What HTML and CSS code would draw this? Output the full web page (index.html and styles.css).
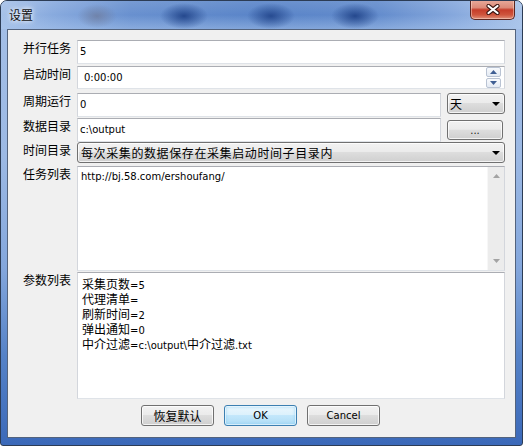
FILE: index.html
```html
<!DOCTYPE html>
<html lang="zh-CN">
<head>
<meta charset="utf-8">
<title>设置</title>
<link rel="stylesheet" href="styles.css">
</head>
<body>
<div class="window">
  <div class="titlebar">
    <span class="title">设置</span>
    <div class="close-btn">
      <svg width="14" height="11" viewBox="0 0 14 11">
        <path d="M2.5 2 L11.5 9 M11.5 2 L2.5 9" stroke="#3c1612" stroke-width="4.2" stroke-linecap="round" fill="none"/>
        <path d="M2.5 2 L11.5 9 M11.5 2 L2.5 9" stroke="#ffffff" stroke-width="2.2" stroke-linecap="round" fill="none"/>
      </svg>
    </div>
  </div>
  <div class="client">
    <div class="row r1">
      <div class="lbl">并行任务</div>
      <div class="edit full"><span class="txt">5</span></div>
    </div>
    <div class="row r2">
      <div class="lbl">启动时间</div>
      <div class="edit full">
        <span class="txt time">0:00:00</span>
        <div class="spin">
          <div class="spin-btn"><svg width="7" height="4" viewBox="0 0 7 4"><path d="M0 4 L3.5 0 L7 4 Z" fill="#3f5e93"/></svg></div>
          <div class="spin-btn"><svg width="7" height="4" viewBox="0 0 7 4"><path d="M0 0 L3.5 4 L7 0 Z" fill="#3f5e93"/></svg></div>
        </div>
      </div>
    </div>
    <div class="row r3">
      <div class="lbl">周期运行</div>
      <div class="edit short"><span class="txt">0</span></div>
      <div class="combo small">
        <span class="combo-txt">天</span>
        <svg class="arrow" width="8" height="4" viewBox="0 0 8 4"><path d="M0 0 L8 0 L4 4 Z" fill="#000"/></svg>
      </div>
    </div>
    <div class="row r4">
      <div class="lbl">数据目录</div>
      <div class="edit short"><span class="txt">c:\output</span></div>
      <div class="btn dots">...</div>
    </div>
    <div class="row r5">
      <div class="lbl">时间目录</div>
      <div class="combo wide">
        <span class="combo-txt long">每次采集的数据保存在采集启动时间子目录内</span>
        <svg class="arrow" width="8" height="4" viewBox="0 0 8 4"><path d="M0 0 L8 0 L4 4 Z" fill="#000"/></svg>
      </div>
    </div>
    <div class="row r6">
      <div class="lbl">任务列表</div>
      <div class="memo full">
        <div class="memo-txt task">http://bj.58.com/ershoufang/</div>
        <div class="vscroll">
          <svg width="7" height="4" viewBox="0 0 7 4"><path d="M0 4 L3.5 0 L7 4 Z" fill="#a3a3a3"/></svg>
          <svg width="7" height="4" viewBox="0 0 7 4"><path d="M0 0 L3.5 4 L7 0 Z" fill="#a3a3a3"/></svg>
        </div>
      </div>
    </div>
    <div class="row r7">
      <div class="lbl">参数列表</div>
      <div class="memo full">
        <div class="memo-txt params">
          <div><span class="cj">采集页数</span>=5</div>
          <div><span class="cj">代理清单</span>=</div>
          <div><span class="cj">刷新时间</span>=2</div>
          <div><span class="cj">弹出通知</span>=0</div>
          <div><span class="cj">中介过滤</span>=c:\output\<span class="cj">中介过滤</span>.txt</div>
        </div>
      </div>
    </div>
    <div class="buttons">
      <div class="btn push cjk">恢复默认</div>
      <div class="btn push default">OK</div>
      <div class="btn push">Cancel</div>
    </div>
  </div>
</div>
</body>
</html>
```

FILE: styles.css
```css
* { box-sizing: border-box; }
html, body { margin: 0; padding: 0; }
body {
  width: 523px;
  height: 446px;
  overflow: hidden;
  background: #ffffff;
  font-family: "Noto Sans CJK SC", sans-serif;
  color: #000;
}

.window {
  width: 523px;
  height: 446px;
  border: 1px solid #2c3c55;
  border-radius: 7px 7px 3px 3px;
  padding: 0 6px 7px 6px;
  background: linear-gradient(180deg, #a4bfe7 0%, #9cb9e4 35%, #84a7dc 60%, #5582c7 80%, #3b69b9 100%);
  display: flex;
  flex-direction: column;
  overflow: hidden;
}

.titlebar {
  height: 28px;
  margin: 0 -6px;
  display: flex;
  justify-content: space-between;
  align-items: flex-start;
  background:
    radial-gradient(ellipse 20px 12px at 96px 15px, rgba(110,125,160,0.8), rgba(110,125,160,0)),
    radial-gradient(ellipse 24px 13px at 183px 15px, rgba(30,65,135,0.9), rgba(30,65,135,0)),
    radial-gradient(ellipse 24px 13px at 270px 15px, rgba(30,65,135,0.85), rgba(30,65,135,0)),
    radial-gradient(ellipse 24px 13px at 354px 15px, rgba(30,65,135,0.9), rgba(30,65,135,0)),
    linear-gradient(180deg, rgba(255,255,255,0.1) 0%, rgba(255,255,255,0) 50%, rgba(170,198,236,0.5) 100%),
    linear-gradient(90deg, #a6c1e8 0%, #88aade 10%, #6890cf 25%, #5984c8 50%, #628bcc 72%, #86a8dd 87%, #abc5ea 100%);
}

.title {
  align-self: center;
  padding-left: 8px;
  font-size: 12px;
  line-height: 14px;
  color: #111;
  text-shadow: 0 0 4px #ffffff, 0 0 7px rgba(255,255,255,0.9);
}

.close-btn {
  width: 45px;
  height: 20px;
  margin-top: -1px;
  margin-right: 7px;
  border: 1px solid #5c2620;
  border-top: none;
  border-radius: 0 0 5px 5px;
  background: linear-gradient(180deg, #e9ab9c 0%, #dc8a78 40%, #c63d2a 52%, #cf553d 78%, #e0907a 100%);
  box-shadow: inset 0 0 0 1px rgba(255,230,220,0.45);
  display: flex;
  align-items: center;
  justify-content: center;
}

.client {
  width: 509px;
  height: 409px;
  border: 1px solid #53637d;
  background: #f0f0f0;
  padding-top: 10px;
}

.row {
  display: flex;
  align-items: flex-start;
}
.r1 { height: 24px; }
.r2 { height: 23px; margin-top: 2px; }
.r3 { height: 24px; margin-top: 4px; }
.r4 { height: 24px; margin-top: 1px; }
.r5 { height: 21px; margin-top: 0; }
.r6 { height: 105px; margin-top: 3px; }
.r7 { height: 127px; margin-top: 1px; }

.lbl {
  width: 69px;
  flex: none;
  padding-left: 15px;
  font-size: 12px;
  line-height: 16px;
  white-space: nowrap;
}

.edit, .memo {
  height: 100%;
  background: #ffffff;
  border: 1px solid;
  border-color: #abadb3 #d3d6dc #dfe3e8 #d3d6dc;
  display: flex;
}
.edit { align-items: center; }
.full { width: 428px; }
.short { width: 364px; }

.txt {
  flex: 1;
  padding-left: 2px;
  font-family: "DejaVu Sans", sans-serif;
  font-size: 10px;
  line-height: 14px;
}
.txt.time { padding-left: 6px; }

.spin {
  align-self: stretch;
  display: flex;
  flex-direction: column;
  margin-right: 3px;
}
.spin-btn {
  width: 15px;
  height: 10px;
  border: 1px solid #b9c3d3;
  border-radius: 2px;
  background: linear-gradient(180deg, #f8fafd 0%, #e4eaf3 100%);
  display: flex;
  align-items: center;
  justify-content: center;
}
.spin-btn + .spin-btn { margin-top: 1px; height: 10px; }

.combo, .btn {
  border: 1px solid #707070;
  border-radius: 3px;
  background: linear-gradient(180deg, #f2f2f2 0%, #ebebeb 46%, #dddddd 50%, #cfcfcf 100%);
  box-shadow: inset 0 0 0 1px rgba(255,255,255,0.75);
}

.combo {
  height: 21px;
  display: flex;
  align-items: center;
  justify-content: space-between;
  padding: 0 4px 0 2px;
}
.combo.small { width: 58px; margin-left: 6px; }
.combo.wide { width: 428px; padding-left: 3px; }
.combo-txt {
  font-size: 12px;
  line-height: 14px;
  white-space: nowrap;
}
.combo-txt.long { letter-spacing: 0.6px; }

.btn.dots {
  width: 56px;
  height: 20px;
  margin-left: 6px;
  margin-top: 2px;
  font-family: "DejaVu Sans", sans-serif;
  font-size: 10px;
  line-height: 20px;
  text-align: center;
  color: #1a1a1a;
}

.memo { align-items: stretch; }
.memo-txt {
  flex: 1;
  font-family: "DejaVu Sans", sans-serif;
  font-size: 10px;
}
.memo-txt.task {
  padding: 3px 0 0 3px;
  line-height: 14px;
}
.memo-txt.params {
  padding: 4px 0 0 4px;
  line-height: 13px;
}
.cj {
  font-family: "Noto Sans CJK SC", sans-serif;
  font-size: 12px;
}

.vscroll {
  width: 17px;
  background: #ececec;
  border-left: 1px solid #f7f7f7;
  display: flex;
  flex-direction: column;
  justify-content: space-between;
  align-items: center;
  padding: 7px 0 7px 0;
}

.buttons {
  margin-top: 6px;
  padding-left: 133px;
  display: flex;
  gap: 10px;
}
.btn.push {
  width: 73px;
  height: 21px;
  font-family: "DejaVu Sans", sans-serif;
  font-size: 10px;
  line-height: 19px;
  text-align: center;
}
.btn.push.cjk {
  font-family: "Noto Sans CJK SC", sans-serif;
  font-size: 12px;
}
.btn.default {
  border-color: #3c7fb1;
  background: linear-gradient(180deg, #ebf7fd 0%, #dcf1fc 46%, #c3e7fb 50%, #aedcf5 100%);
  box-shadow: inset 0 0 0 1px rgba(255,255,255,0.6), inset 0 0 3px 1px rgba(120,200,245,0.6);
}
```
